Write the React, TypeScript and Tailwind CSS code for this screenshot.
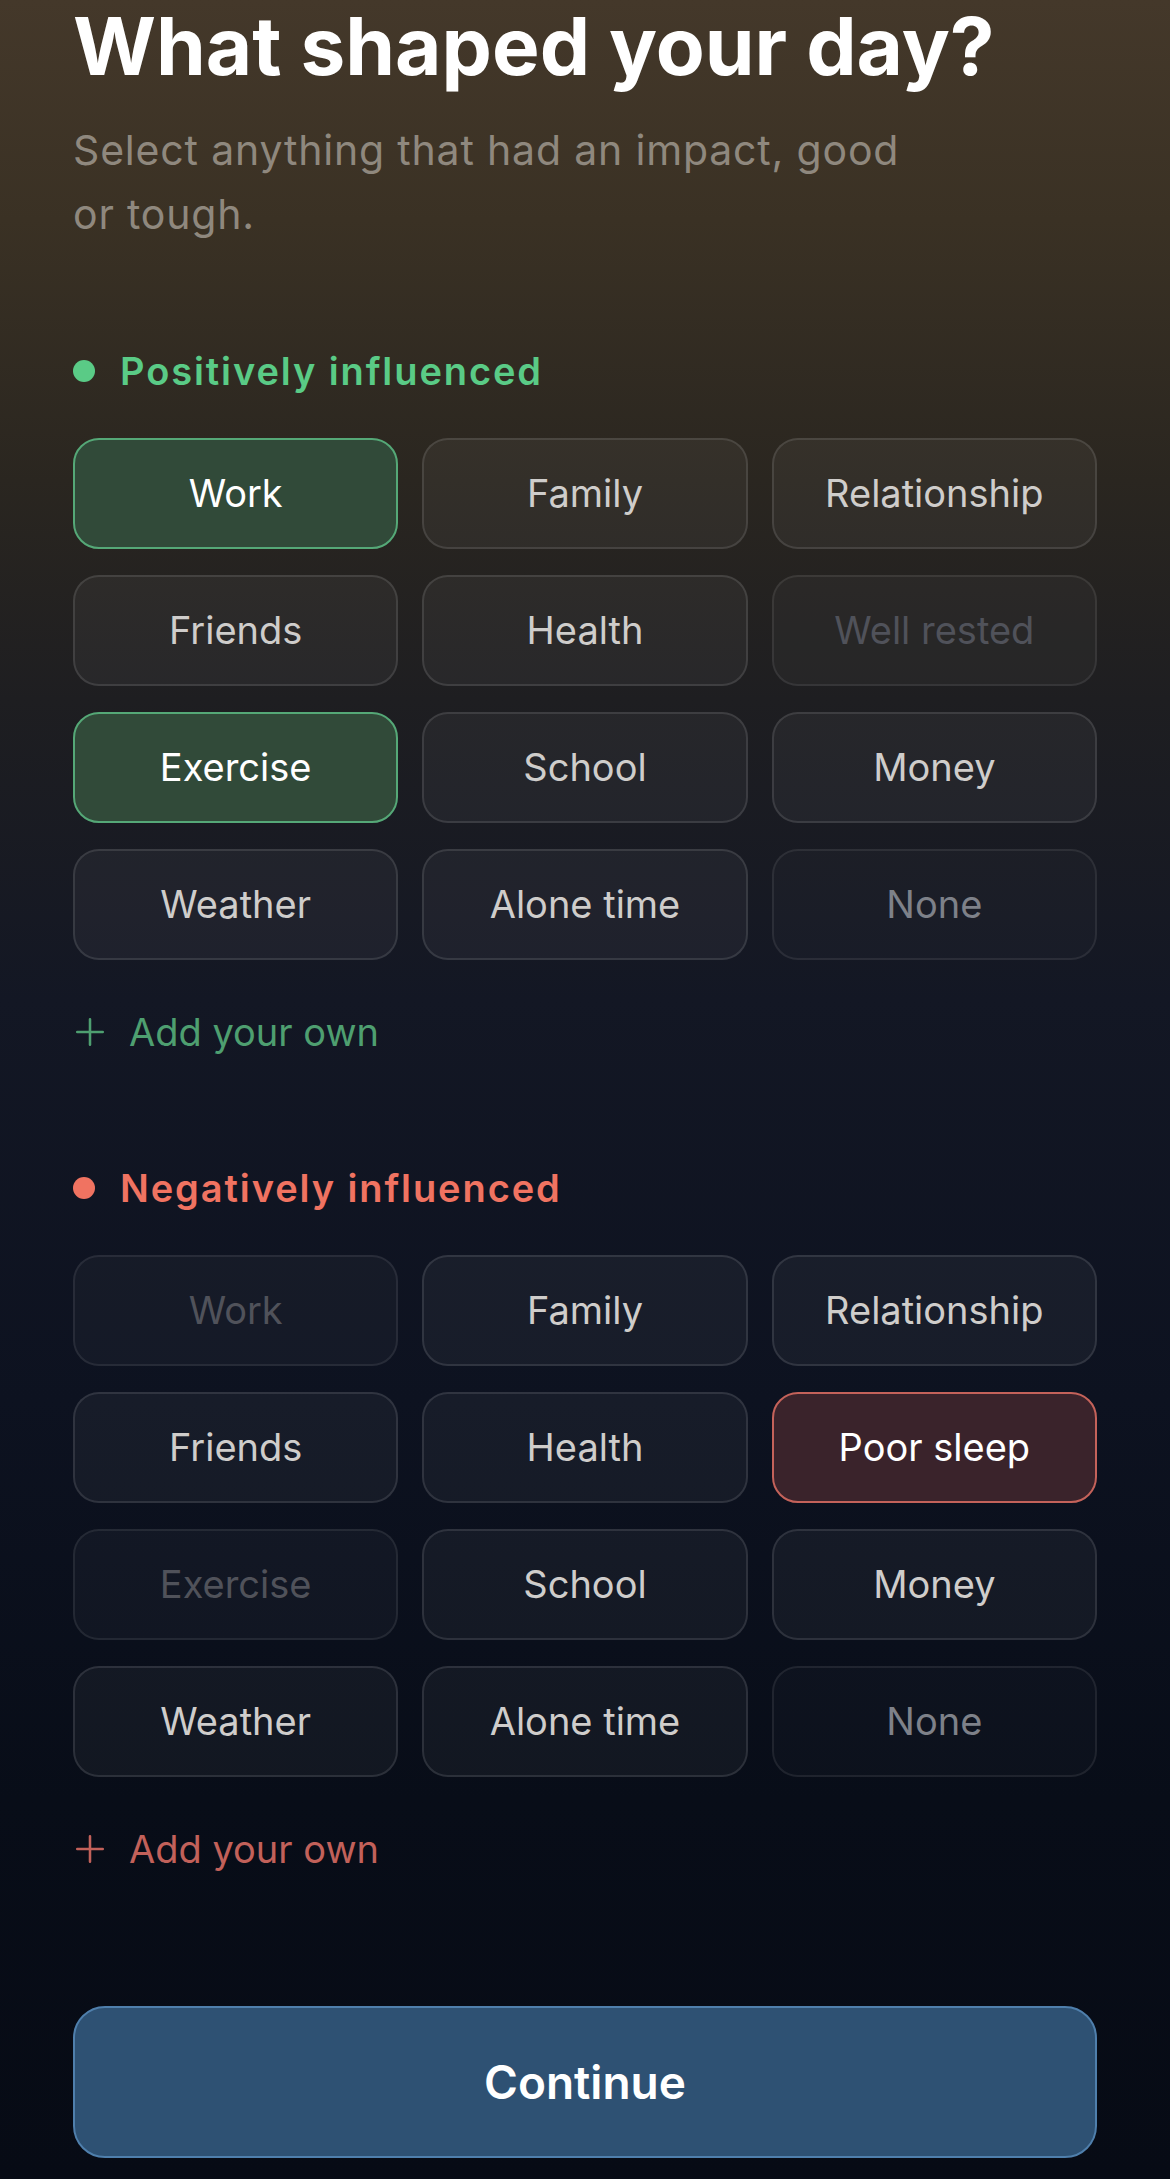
import React from 'react';

type ChipState = 'default' | 'selected' | 'dimmed' | 'none';

interface Chip {
  label: string;
  state: ChipState;
}

const positive: Chip[] = [
  { label: 'Work', state: 'selected' },
  { label: 'Family', state: 'default' },
  { label: 'Relationship', state: 'default' },
  { label: 'Friends', state: 'default' },
  { label: 'Health', state: 'default' },
  { label: 'Well rested', state: 'dimmed' },
  { label: 'Exercise', state: 'selected' },
  { label: 'School', state: 'default' },
  { label: 'Money', state: 'default' },
  { label: 'Weather', state: 'default' },
  { label: 'Alone time', state: 'default' },
  { label: 'None', state: 'none' },
];

const negative: Chip[] = [
  { label: 'Work', state: 'dimmed' },
  { label: 'Family', state: 'default' },
  { label: 'Relationship', state: 'default' },
  { label: 'Friends', state: 'default' },
  { label: 'Health', state: 'default' },
  { label: 'Poor sleep', state: 'selected' },
  { label: 'Exercise', state: 'dimmed' },
  { label: 'School', state: 'default' },
  { label: 'Money', state: 'default' },
  { label: 'Weather', state: 'default' },
  { label: 'Alone time', state: 'default' },
  { label: 'None', state: 'none' },
];

const PlusIcon: React.FC<{ className?: string }> = ({ className }) => (
  <svg viewBox="0 0 24 24" className={className} fill="none" stroke="currentColor" strokeWidth={1.8} strokeLinecap="round">
    <path d="M12 3v18M3 12h18" />
  </svg>
);

const ChipButton: React.FC<{ chip: Chip; tone: 'good' | 'bad' }> = ({ chip, tone }) => {
  let cls = 'bg-white/[0.045] border-white/[0.11] text-[#cfcdcb]';
  if (chip.state === 'selected') {
    cls =
      tone === 'good'
        ? 'bg-[#314a39] border-[#55a877] text-white'
        : 'bg-[#3a232b] border-[#c4625a] text-white';
  } else if (chip.state === 'dimmed') {
    cls = 'bg-white/[0.03] border-white/[0.08] text-[#50525a]';
  } else if (chip.state === 'none') {
    cls = 'bg-white/[0.02] border-white/[0.08] text-[#7e8189]';
  }
  return (
    <button className={`h-[111px] rounded-[26px] border-2 flex items-center justify-center text-[38px] ${cls}`}>
      {chip.label}
    </button>
  );
};

const Section: React.FC<{ title: string; tone: 'good' | 'bad'; chips: Chip[] }> = ({ title, tone, chips }) => {
  const good = tone === 'good';
  return (
    <section>
      <div className="flex items-center gap-[25px] h-[44px]">
        <span className={`w-[22px] h-[22px] rounded-full ${good ? 'bg-[#5acb86]' : 'bg-[#f07361]'}`} />
        <span
          className={`text-[38px] font-semibold tracking-[0.05em] ${good ? 'text-[#5acb86]' : 'text-[#f07361]'}`}
        >
          {title}
        </span>
      </div>
      <div className="mt-[45px] grid grid-cols-3 gap-x-6 gap-y-[26px]">
        {chips.map(c => (
          <ChipButton key={c.label} chip={c} tone={tone} />
        ))}
      </div>
      <button
        className={`mt-[50px] flex items-center gap-[22px] h-[44px] text-[38px] ${good ? 'text-[#4e9f70]' : 'text-[#c2615a]'}`}
      >
        <PlusIcon className="w-[34px] h-[34px]" />
        Add your own
      </button>
    </section>
  );
};

export default function App() {
  return (
    <div
      className="min-h-[2179px] w-full bg-[linear-gradient(180deg,#44382a_0px,#3a3124_220px,#2a2620_480px,#1e1e21_700px,#131724_1000px,#0d1220_1400px,#080d18_1800px,#070b15_2179px)] px-[73px]"
      style={{ fontFamily: 'Inter, "Noto Sans", sans-serif' }}
    >
      <h1 className="pt-[2px] text-[80px] leading-[88px] font-bold text-white">What shaped your day?</h1>
      <p className="mt-[28px] max-w-[870px] text-[41px] leading-[64px] tracking-[0.02em] text-[#8f887e]">
        Select anything that had an impact, good or tough.
      </p>

      <div className="mt-[103px]">
        <Section title="Positively influenced" tone="good" chips={positive} />
      </div>
      <div className="mt-[112px]">
        <Section title="Negatively influenced" tone="bad" chips={negative} />
      </div>

      <button className="mt-[135px] w-full h-[152px] rounded-[32px] bg-[#2e5173] border-2 border-[#4f7fac] text-white text-[46px] font-semibold">
        Continue
      </button>
    </div>
  );
}
